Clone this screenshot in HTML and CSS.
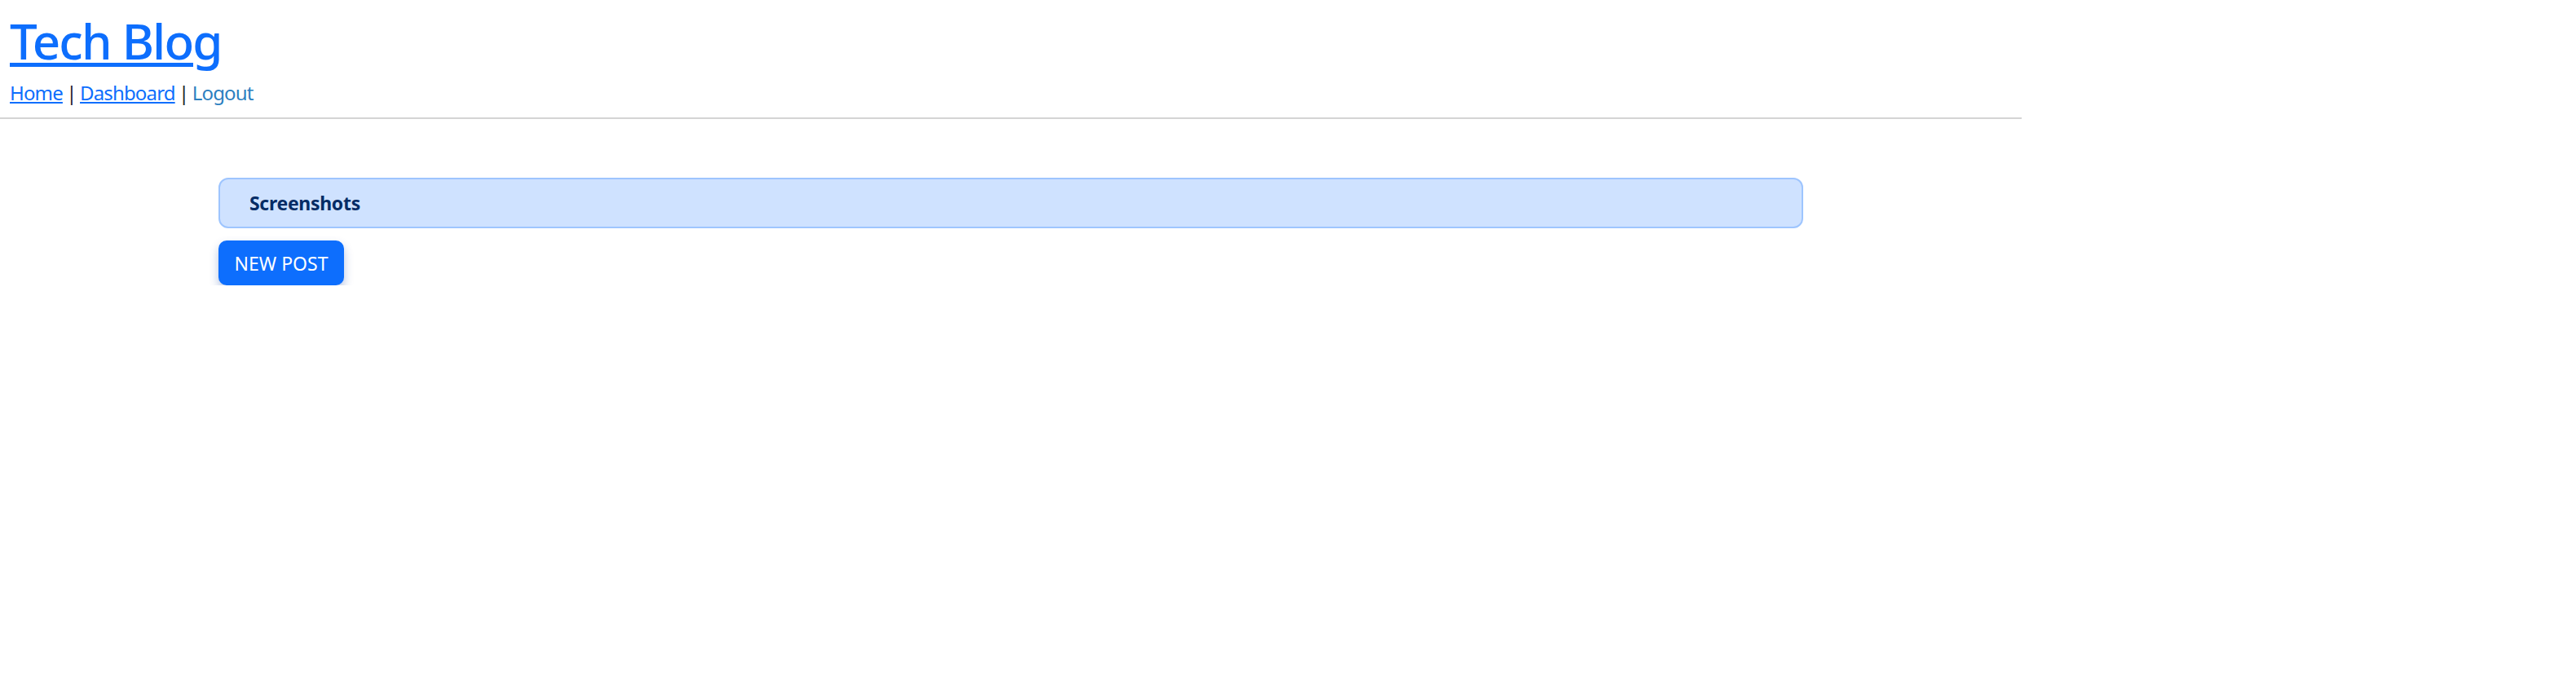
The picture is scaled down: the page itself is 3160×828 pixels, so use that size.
FILE: index.html
```html
<!DOCTYPE html>
<html lang="en">
<head>
<meta charset="utf-8">
<title>Tech Blog</title>
<link rel="stylesheet" href="styles.css">
</head>
<body>
<div class="page">
  <header class="site-header">
    <h1 class="site-title"><a href="#">Tech Blog</a></h1>
    <nav class="site-nav">
      <a href="#" class="nav-link">Home</a> <span class="sep">|</span> <a href="#" class="nav-link">Dashboard</a> <span class="sep">|</span> <span class="logout">Logout</span>
    </nav>
  </header>
  <main class="main">
    <div class="container">
      <div class="post-card">Screenshots</div>
      <button class="btn-new">NEW POST</button>
    </div>
  </main>
</div>
</body>
</html>
```

FILE: styles.css
```css
html, body {
  margin: 0;
  padding: 0;
  background: #ffffff;
}
body {
  font-family: "Noto Sans", "Open Sans", sans-serif;
  color: #212529;
}
.page {
  width: 2480px;
}
.site-header {
  padding: 14px 12px 0;
  height: 130px;
  border-bottom: 2px solid #d4d4d4;
}
.site-title {
  margin: 0;
  font-size: 60px;
  font-weight: 500;
  line-height: 72px;
  letter-spacing: -1.8px;
}
.site-title a {
  color: #0d6efd;
  text-decoration-thickness: 5px;
  text-underline-offset: 4px;
}
.site-nav {
  margin-top: 10px;
  font-size: 24px;
  line-height: 36px;
  letter-spacing: -0.85px;
  word-spacing: -1px;
}
.nav-link {
  color: #0d6efd;
}
.sep {
  color: #212529;
}
.logout {
  color: #2c80c0;
}
.main {
  padding-top: 72px;
}
.container {
  width: 1944px;
  margin: 0 auto;
  display: flex;
  flex-direction: column;
  align-items: flex-start;
  gap: 15px;
}
.post-card {
  box-sizing: border-box;
  width: 100%;
  height: 62px;
  display: flex;
  align-items: center;
  padding: 0 36px;
  background: #cfe2ff;
  border: 2px solid #9ec5fe;
  border-radius: 12px;
  color: #052c65;
  font-size: 23px;
  font-weight: 700;
  letter-spacing: -0.3px;
}
.btn-new {
  box-sizing: border-box;
  width: 154px;
  height: 55px;
  border: none;
  border-radius: 10px;
  background: #0d6efd;
  color: #ffffff;
  font-family: "Noto Sans", "Open Sans", sans-serif;
  font-size: 23px;
  padding: 0;
  box-shadow: 0 6px 12px rgba(13, 60, 160, 0.3);
}
```
